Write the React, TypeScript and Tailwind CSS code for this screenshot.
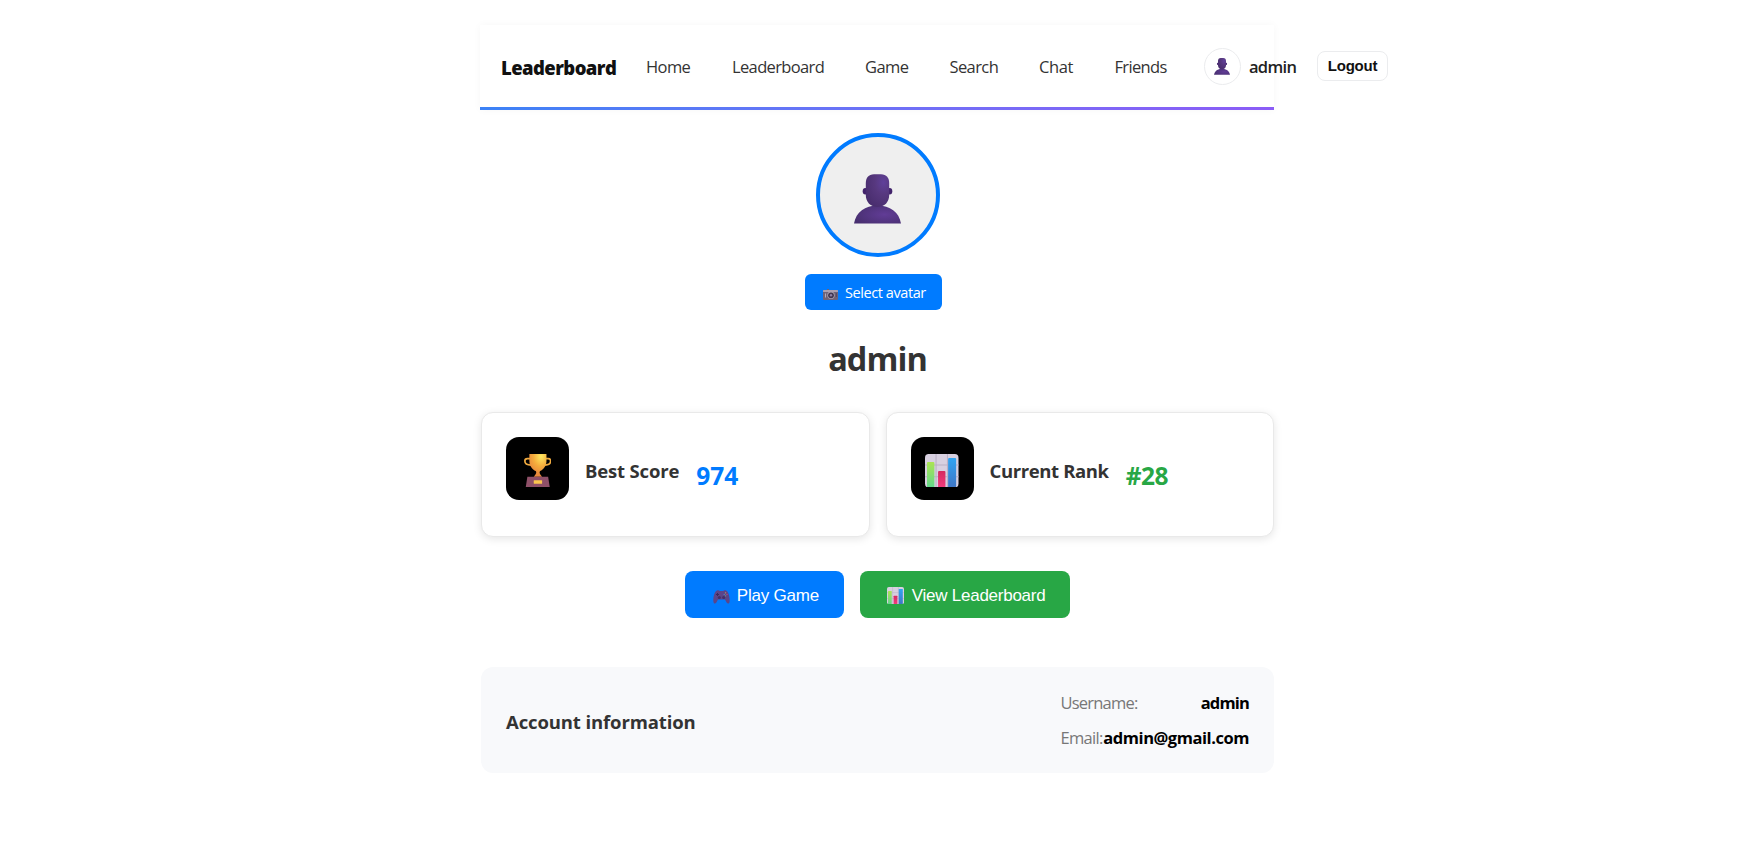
import React from "react";

type IconProps = { className?: string; id: string };

function PersonIcon({ className, id }: IconProps) {
  return (
    <svg viewBox="0 0 47 50" className={className} preserveAspectRatio="none">
      <defs>
        <radialGradient id={`${id}-head`} cx="0.75" cy="0.25" r="0.9">
          <stop offset="0" stopColor="#60409a" />
          <stop offset="0.4" stopColor="#57387f" />
          <stop offset="1" stopColor="#472c6c" />
        </radialGradient>
        <radialGradient id={`${id}-body`} cx="0.65" cy="0.5" r="0.7">
          <stop offset="0" stopColor="#613c96" />
          <stop offset="1" stopColor="#482f70" />
        </radialGradient>
      </defs>
      <ellipse cx="11.3" cy="17.3" rx="2.6" ry="3.2" fill="#42236b" />
      <ellipse cx="35.7" cy="17.3" rx="2.6" ry="3.2" fill="#42236b" />
      <path d="M0 49.500C2 38 11 31.500 23.500 31.500S45 38 47 49.500Z" fill={`url(#${id}-body)`} />
      <path d="M20 .3H27C32.500 .3 35.200 4 35.200 9V21C35.200 28 30.500 33 23.500 33S11.800 28 11.800 21V9C11.800 4 14.500 .3 20 .3Z" fill={`url(#${id}-head)`} />
    </svg>
  );
}

function TrophyIcon({ className, id }: IconProps) {
  return (
    <svg viewBox="0 0 82 100" className={className}>
      <defs>
        <radialGradient id={`${id}-cup`} cx="0.68" cy="0.1" r="0.8">
          <stop offset="0" stopColor="#ffea62" />
          <stop offset="0.55" stopColor="#f5ac3c" />
          <stop offset="1" stopColor="#e8893c" />
        </radialGradient>
      </defs>
      <path d="M19 14H10C4 14 2.500 18 2.500 21C2.500 28 10 33 22 33M63 14H72C78 14 79.500 18 79.500 21C79.500 28 72 33 60 33" fill="none" stroke="#efaa3f" strokeWidth="5" />
      <path d="M16 0H67V20C67 36 58 46 48 51C45 54 46 60 54 68H29C37 60 38 54 35 51C25 46 16 36 16 20Z" fill={`url(#${id}-cup)`} />
      <path d="M10 68H72L77 100H5Z" fill="#8f5068" />
      <rect x="29" y="78" width="25" height="11" rx="1.500" fill="#fcc64f" />
    </svg>
  );
}

function ChartIcon({ className, id }: IconProps) {
  return (
    <svg viewBox="0 0 100 100" className={className}>
      <defs>
        <linearGradient id={`${id}-green`} x1="0" y1="0" x2="0" y2="1">
          <stop offset="0" stopColor="#abe452" />
          <stop offset="1" stopColor="#62d78c" />
        </linearGradient>
        <linearGradient id={`${id}-pink`} x1="0" y1="0" x2="0" y2="1">
          <stop offset="0" stopColor="#d52a60" />
          <stop offset="1" stopColor="#f23c7d" />
        </linearGradient>
        <linearGradient id={`${id}-blue`} x1="0" y1="0" x2="0" y2="1">
          <stop offset="0" stopColor="#30a5f2" />
          <stop offset="1" stopColor="#3f76c6" />
        </linearGradient>
      </defs>
      <rect width="100" height="100" rx="11" fill="#d8d0e0" />
      <path d="M33 0V100M67 0V100M0 33H100M0 68H100" stroke="#b9afc4" strokeWidth="3" />
      <path d="M6 100V27Q6 24 9 24H25Q28 24 28 27V100Z" fill={`url(#${id}-green)`} />
      <path d="M39 100V54Q39 51 42 51H58Q61 51 61 54V100Z" fill={`url(#${id}-pink)`} />
      <path d="M69 100V15Q69 12 72 12H90Q93 12 93 15V100Z" fill={`url(#${id}-blue)`} />
    </svg>
  );
}

function CameraIcon({ className }: { className?: string }) {
  return (
    <svg viewBox="0 0 15 11" className={className}>
      <path d="M1 1H4V0H6V1H14Q15 1 15 2V10Q15 11 14 11H1Q0 11 0 10V2Q0 1 1 1Z" fill="#6e6478" />
      <rect y="1" width="15" height="2" rx="0.6" fill="#aaa0af" />
      <circle cx="8" cy="6.300" r="3.700" fill="#a9a1b3" />
      <circle cx="8" cy="6.300" r="2.900" fill="#40364f" />
      <circle cx="8" cy="6.300" r="1.200" fill="#8c7fa5" />
      <rect x="2" y="4.500" width="1" height="4" fill="#b3a9b8" />
      <rect x="12.800" y="4" width="1" height="4" fill="#57495f" />
    </svg>
  );
}

function GamepadIcon({ className }: { className?: string }) {
  return (
    <svg viewBox="0 0 17 14" className={className}>
      <path d="M4 .5C5.500 0 6 1 7 1H10C11 1 11.500 0 13 .5C15.500 1.500 17 7 16.600 11.500C16.400 14 14.500 14 13.600 12.500L12 9.500H5L3.400 12.500C2.500 14 .6 14 .4 11.500C0 7 1.500 1.500 4 .5Z" fill="#5c4588" />
      <path d="M4.500 3V6M3 4.500H6" stroke="#3b2b5c" strokeWidth="1" />
      <circle cx="6.300" cy="7.500" r="1.500" fill="#432f66" />
      <circle cx="10.700" cy="7.500" r="1.500" fill="#432f66" />
      <circle cx="12.600" cy="2.800" r="0.600" fill="#c9a65a" />
      <circle cx="14" cy="4.400" r="0.600" fill="#c9487a" />
      <circle cx="11.200" cy="4.400" r="0.600" fill="#4b8ed0" />
      <circle cx="12.600" cy="5.800" r="0.600" fill="#5cb080" />
    </svg>
  );
}

function Header() {
  return (
    <header className="h-[85px] shadow-[0_0_8px_rgba(0,0,0,0.035)]">
      <nav className="flex h-[82px] items-center pl-[21px] text-[16.5px] leading-6 text-[#333] *:shrink-0">
        <a className="w-[145px] pt-1 text-[18.5px] font-extrabold tracking-[-0.57px] text-[#111]">Leaderboard</a>
        <a className="w-[86px] pt-px tracking-[-0.6px]">Home</a>
        <a className="w-[133px] pt-px tracking-[-0.64px]">Leaderboard</a>
        <a className="w-[84.5px] pt-px tracking-[-0.6px]">Game</a>
        <a className="w-[89.5px] pt-px tracking-[-0.6px]">Search</a>
        <a className="w-[75.5px] pt-px tracking-[-0.4px]">Chat</a>
        <a className="w-[89.5px] pt-px tracking-[-0.65px]">Friends</a>
        <span className="flex size-[37px] items-center justify-center rounded-full border border-[#ebecee] bg-white">
          <PersonIcon id="nav-person" className="mr-px mt-px h-[17px] w-4" />
        </span>
        <span className="ml-2 w-[68px] pt-px font-semibold tracking-[-0.7px] text-[#222]">admin</span>
        <button className="flex h-[30px] w-[71px] justify-center rounded-lg border border-[#ebecee] bg-white pt-[2px] font-['Liberation_Sans',sans-serif] text-[15px] font-bold tracking-[-0.25px] text-[#111]">
          Logout
        </button>
      </nav>
      <div className="h-[3px] bg-linear-to-r from-[#3b82f6] to-[#8b5cf6]" />
    </header>
  );
}

type StatProps = { icon: React.ReactNode; label: React.ReactNode; value: React.ReactNode };

function StatCard({ icon, label, value }: StatProps) {
  return (
    <div className="flex h-[125px] flex-1 items-start rounded-xl border border-[#e9e9e9] bg-white pl-6 pt-6 shadow-[0_2px_8px_rgba(0,0,0,0.1)]">
      <div className="flex size-[63px] items-center justify-center rounded-[13px] bg-black">{icon}</div>
      <h3 className="ml-4 mt-[22px] text-[18.5px] font-bold leading-6 text-[#333]">{label}</h3>
      {value}
    </div>
  );
}

export default function App() {
  return (
    <div className="min-h-[848px] w-full overflow-hidden bg-white pr-px pt-[25px] font-['Open_Sans','Noto_Sans',sans-serif]">
      <main className="mx-auto w-[794px]">
        <Header />

        <section className="flex flex-col items-center pt-[23px]">
          <div className="ml-px flex size-[124px] items-center justify-center rounded-full border-4 border-[#007bff] bg-[#efefef]">
            <PersonIcon id="profile-person" className="mt-[7px] h-[50px] w-[47px]" />
          </div>
          <button className="mr-[7px] mt-[17px] flex h-9 w-[137px] items-center rounded-md bg-[#007bff] pl-[18px] text-[14.5px] leading-5 text-white">
            <CameraIcon className="mt-[5px] h-[11px] w-[15px]" />
            <span className="ml-[7px] mt-0.5 whitespace-nowrap tracking-[-0.42px]">Select avatar</span>
          </button>
          <h1 className="ml-px mt-[29px] text-[32.5px] font-bold leading-10 tracking-[-0.95px] text-[#333]">admin</h1>
        </section>

        <section className="ml-px mt-[33px] flex gap-4">
          <StatCard
            icon={<TrophyIcon id="trophy" className="mt-1 h-[33.500px] w-[27.500px]" />}
            label={<span className="tracking-[-0.16px]">Best Score</span>}
            value={<p className="ml-[17px] mt-[24px] text-[24.5px] font-bold leading-[30px] text-[#007bff]">974</p>}
          />
          <StatCard
            icon={<ChartIcon id="rank-chart" className="mt-1 size-[33.500px]" />}
            label={<span className="tracking-[-0.38px]">Current Rank</span>}
            value={<p className="ml-[17px] mt-[24px] text-[24.5px] font-bold leading-[30px] tracking-[-0.5px] text-[#28a745]">#28</p>}
          />
        </section>

        <section className="ml-px mt-[34px] flex justify-center gap-4 font-['Liberation_Sans',sans-serif] text-[17px] text-white">
          <button className="flex h-[47px] w-[159px] items-center rounded-lg bg-[#007bff] pl-7">
            <GamepadIcon className="mt-1 h-[14px] w-[17px]" />
            <span className="ml-[7px] mt-0.5 tracking-[-0.2px]">Play Game</span>
          </button>
          <button className="flex h-[47px] w-[210.500px] items-center rounded-lg bg-[#28a745] pl-[27px]">
            <ChartIcon id="button-chart" className="mt-px size-[17px]" />
            <span className="ml-[8px] mt-0.5 tracking-[-0.25px]">View Leaderboard</span>
          </button>
        </section>

        <section className="ml-px mt-[49px] flex h-[106px] items-center justify-between rounded-xl bg-[#f8f9fb] px-[25px]">
          <h3 className="mt-[3px] text-[18.5px] font-bold leading-6 tracking-[-0.12px] text-[#333]">Account information</h3>
          <dl className="flex w-[188.500px] flex-col gap-[11px] text-[16.5px] leading-6">
            <div className="flex justify-between">
              <dt className="tracking-[-0.78px] text-[#777]">Username:</dt>
              <dd className="font-bold tracking-[-0.85px] text-black">admin</dd>
            </div>
            <div className="flex justify-between">
              <dt className="tracking-[-0.7px] text-[#777]">Email:</dt>
              <dd className="font-bold tracking-[-0.45px] text-black">admin@gmail.com</dd>
            </div>
          </dl>
        </section>
      </main>
    </div>
  );
}
